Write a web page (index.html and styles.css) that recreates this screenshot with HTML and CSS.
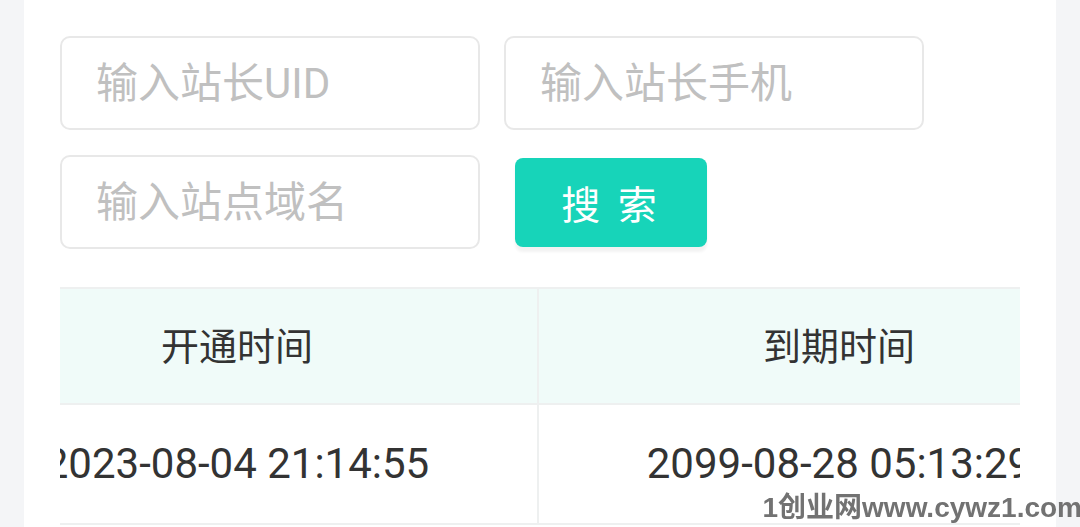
FILE: index.html
```html
<!DOCTYPE html>
<html lang="zh-CN">
<head>
    <meta charset="UTF-8">
    <meta name="viewport" content="width=device-width, initial-scale=1.0">
    <title>站点列表</title>
    <link rel="stylesheet" href="styles.css">
</head>
<body>
    <div class="card">
        <div class="search">
            <input type="text" class="field" placeholder="输入站长UID">
            <input type="text" class="field" placeholder="输入站长手机">
            <input type="text" class="field" placeholder="输入站点域名">
            <button class="search-btn">搜 索</button>
        </div>

        <div class="table-wrap">
            <table class="sites">
                <thead>
                    <tr>
                        <th>开通时间</th>
                        <th>到期时间</th>
                    </tr>
                </thead>
                <tbody>
                    <tr>
                        <td>2023-08-04 21:14:55</td>
                        <td>2099-08-28 05:13:29</td>
                    </tr>
                </tbody>
            </table>
        </div>
    </div>

    <div class="watermark">1创业网www.cywz1.com</div>
</body>
</html>
```

FILE: styles.css
```css
body {
    margin: 0;
    height: 100vh;
    overflow: hidden;
    background-color: #f4f5f7;
    font-family: Roboto, "Noto Sans CJK SC", sans-serif;
    color: #333;
}

.card {
    margin: 0 24px;
    padding: 36px;
    height: 100vh;
    box-sizing: border-box;
    background-color: #fff;
}

.search {
    display: flex;
    flex-wrap: wrap;
    align-items: center;
    column-gap: 24px;
    row-gap: 25px;
}

.field {
    width: 420px;
    height: 94px;
    box-sizing: border-box;
    padding: 0 34px;
    border: 2px solid #e8e8e8;
    border-radius: 10px;
    font-family: inherit;
    font-size: 42px;
    color: #333;
    outline: none;
}

.field::placeholder {
    color: #c0c0c0;
}

.search-btn {
    width: 192px;
    height: 89px;
    margin-left: 11px;
    border: none;
    border-radius: 8px;
    background-color: #17d4b9;
    color: #fff;
    font-family: inherit;
    font-size: 39px;
    letter-spacing: 4px;
    box-shadow: 0 5px 3px rgba(0,0,0,0.05);
    cursor: pointer;
}

.table-wrap {
    margin-top: 38px;
    overflow: hidden;
}

.sites {
    width: 1200px;
    margin-left: -125px;
    border-collapse: collapse;
    table-layout: fixed;
}

.sites th,
.sites td {
    width: 600px;
    padding: 0 0 6px;
    border: 2px solid #eef0f0;
    text-align: center;
    font-weight: normal;
    white-space: nowrap;
}

.sites th {
    height: 108px;
    background-color: #f0fbf9;
    font-size: 38px;
}

.sites td {
    height: 116px;
    padding-bottom: 2px;
    font-size: 42px;
}

.watermark {
    position: fixed;
    right: -2px;
    bottom: 2px;
    font-family: "Liberation Sans", "Noto Sans CJK SC", sans-serif;
    font-size: 28px;
    font-weight: bold;
    color: #727272;
}
```
